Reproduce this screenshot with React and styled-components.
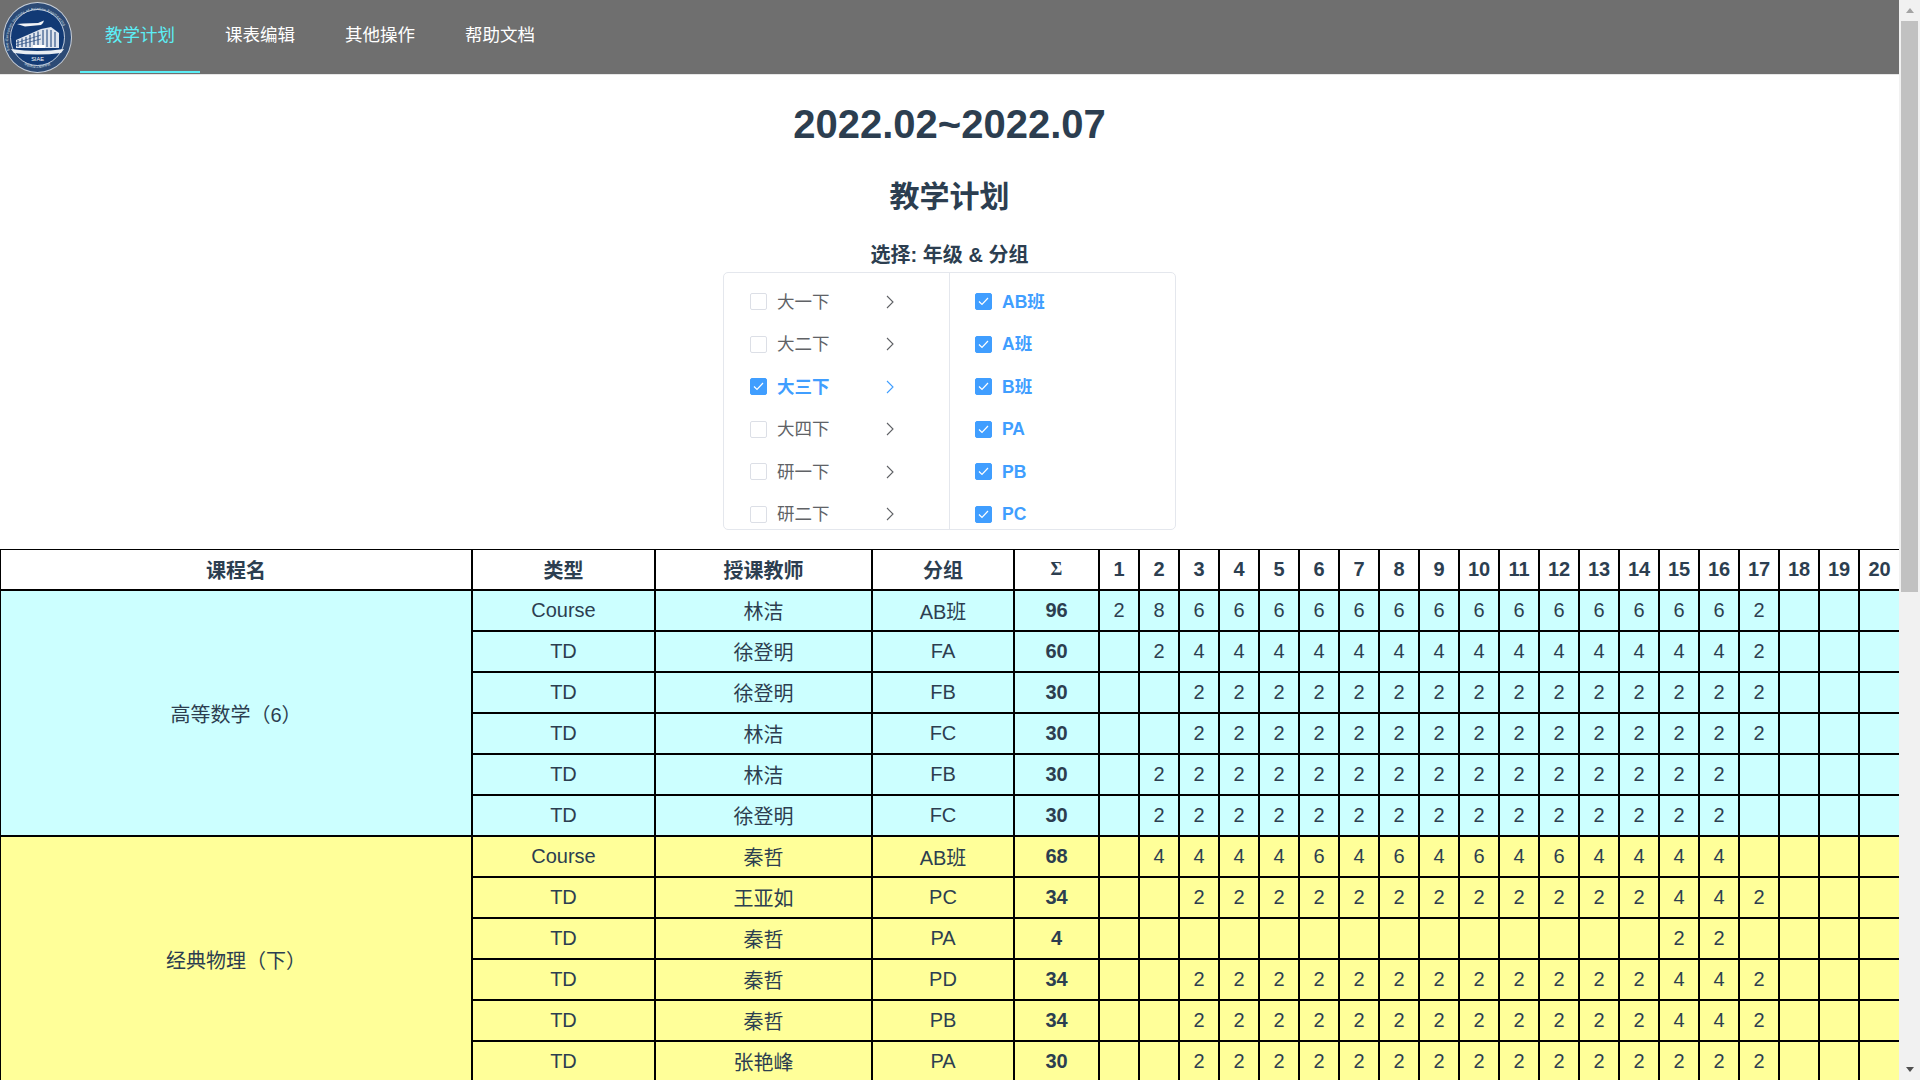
import styled, { createGlobalStyle } from "styled-components";

const GlobalStyle = createGlobalStyle`
  html, body { margin: 0; padding: 0; background: #fff; }
  body {
    font-family: "Liberation Sans", "Noto Sans CJK SC", sans-serif;
    color: #2c3e50;
  }
`;

const terms = ["大一下", "大二下", "大三下", "大四下", "研一下", "研二下"];
const groups = ["AB班", "A班", "B班", "PA", "PB", "PC"];
const navItems = ["教学计划", "课表编辑", "其他操作", "帮助文档"];

const blocks = [
  {
    name: "高等数学（6）",
    tone: "#ccffff",
    rows: [
      ["Course", "林洁", "AB班", 96, [2, 8, 6, 6, 6, 6, 6, 6, 6, 6, 6, 6, 6, 6, 6, 6, 2]],
      ["TD", "徐登明", "FA", 60, ["", 2, 4, 4, 4, 4, 4, 4, 4, 4, 4, 4, 4, 4, 4, 4, 2]],
      ["TD", "徐登明", "FB", 30, ["", "", 2, 2, 2, 2, 2, 2, 2, 2, 2, 2, 2, 2, 2, 2, 2]],
      ["TD", "林洁", "FC", 30, ["", "", 2, 2, 2, 2, 2, 2, 2, 2, 2, 2, 2, 2, 2, 2, 2]],
      ["TD", "林洁", "FB", 30, ["", 2, 2, 2, 2, 2, 2, 2, 2, 2, 2, 2, 2, 2, 2, 2]],
      ["TD", "徐登明", "FC", 30, ["", 2, 2, 2, 2, 2, 2, 2, 2, 2, 2, 2, 2, 2, 2, 2]],
    ],
  },
  {
    name: "经典物理（下）",
    tone: "#ffff99",
    rows: [
      ["Course", "秦哲", "AB班", 68, ["", 4, 4, 4, 4, 6, 4, 6, 4, 6, 4, 6, 4, 4, 4, 4]],
      ["TD", "王亚如", "PC", 34, ["", "", 2, 2, 2, 2, 2, 2, 2, 2, 2, 2, 2, 2, 4, 4, 2]],
      ["TD", "秦哲", "PA", 4, ["", "", "", "", "", "", "", "", "", "", "", "", "", "", 2, 2]],
      ["TD", "秦哲", "PD", 34, ["", "", 2, 2, 2, 2, 2, 2, 2, 2, 2, 2, 2, 2, 4, 4, 2]],
      ["TD", "秦哲", "PB", 34, ["", "", 2, 2, 2, 2, 2, 2, 2, 2, 2, 2, 2, 2, 4, 4, 2]],
      ["TD", "张艳峰", "PA", 30, ["", "", 2, 2, 2, 2, 2, 2, 2, 2, 2, 2, 2, 2, 2, 2, 2]],
    ],
  },
];

const weeks = Array.from({ length: 20 }, (_, i) => i + 1);

const Page = styled.div`
  width: 1899px;
  padding-bottom: 40px;
`;

const ScrollRail = styled.div`
  position: fixed;
  top: 0;
  right: 0;
  width: 21px;
  height: 100vh;
  background: #f1f1f1;
  display: flex;
  flex-direction: column;
`;

const ScrollButton = styled.div`
  height: 21px;
  flex: none;
  display: flex;
  align-items: center;
  justify-content: center;
  &::before {
    content: "";
    border-left: 4.5px solid transparent;
    border-right: 4.5px solid transparent;
    ${(p) => (p.$down ? "border-top: 5px solid #505050;" : "border-bottom: 5px solid #a3a3a3;")}
  }
`;

const ScrollThumb = styled.div`
  height: 571px;
  margin: 0 2px;
  background: #c1c1c1;
`;

const ScrollGap = styled.div`
  flex: 1;
`;

const Nav = styled.nav`
  display: flex;
  align-items: flex-start;
  height: 74px;
  background: #6f6f6f;
  border-bottom: 1px solid #e6e6e6;
`;

const LogoBox = styled.div`
  width: 80px;
  padding: 2px 0 0 3px;
  box-sizing: border-box;
`;

const NavItem = styled.div`
  width: 120px;
  height: 73px;
  box-sizing: border-box;
  display: flex;
  align-items: center;
  justify-content: center;
  padding-bottom: 4px;
  font-size: 17.5px;
  color: ${(p) => (p.$active ? "#5ceef6" : "#fff")};
  border-bottom: 2px solid ${(p) => (p.$active ? "#5ceef6" : "transparent")};
`;

const Title = styled.h1`
  margin: 26px 0 0;
  font-size: 40px;
  line-height: 46px;
  text-align: center;
`;

const SubTitle = styled.h2`
  margin: 28px 0 0;
  font-size: 30px;
  line-height: 44px;
  text-align: center;
`;

const Label = styled.h3`
  margin: 21px 0 0;
  font-size: 20px;
  line-height: 30px;
  text-align: center;
`;

const Panel = styled.div`
  display: flex;
  width: 453px;
  height: 258px;
  box-sizing: border-box;
  margin: 2px auto 19px;
  border: 1px solid #e4e7ed;
  border-radius: 5px;
  overflow: hidden;
`;

const Menu = styled.ul`
  list-style: none;
  margin: 0;
  padding: 7.5px 0 0;
  width: ${(p) => (p.$first ? "225px" : "226px")};
  flex: none;
  box-sizing: border-box;
  height: 256px;
  overflow: hidden;
  & + & {
    border-left: 1px solid #e4e7ed;
  }
`;

const MenuRow = styled.li`
  display: flex;
  align-items: center;
  height: 42.5px;
  padding-left: ${(p) => (p.$inset ? "25px" : "26px")};
  font-size: 17.5px;
  font-weight: ${(p) => (p.$on ? 700 : 400)};
  color: ${(p) => (p.$on ? "#409eff" : "#606266")};
`;

const Check = styled.span`
  width: 17px;
  height: 17px;
  box-sizing: border-box;
  flex: none;
  margin-right: 10px;
  border-radius: 2px;
  border: 1px solid ${(p) => (p.$on ? "#409eff" : "#dcdfe6")};
  background: ${(p) => (p.$on ? "#409eff" : "#fff")};
  display: flex;
  align-items: center;
  justify-content: center;
`;

const RowText = styled.span`
  width: 109px;
  line-height: 20px;
`;

const Grid = styled.table`
  width: 1899px;
  table-layout: fixed;
  border-collapse: separate;
  border-spacing: 0;
  border-top: 1px solid #000;
  border-left: 1px solid #000;
  font-size: 20px;
  text-align: center;
`;

const Th = styled.th`
  height: 41px;
  padding: 0;
  box-sizing: border-box;
  font-size: ${(p) => (p.$sigma ? "18px" : "20px")};
  font-family: ${(p) => (p.$sigma ? '"Liberation Serif", serif' : "inherit")};
  border-right: 2px solid #000;
  border-bottom: 2px solid #000;
  &:last-child {
    border-right-width: 1px;
  }
`;

const Td = styled.td`
  height: 41px;
  padding: 0;
  box-sizing: border-box;
  background: ${(p) => p.$tone};
  font-weight: ${(p) => (p.$bold ? 700 : 400)};
  border-right: 2px solid #000;
  border-bottom: 2px solid #000;
  &:last-child {
    border-right-width: 1px;
  }
`;

const Tick = () => (
  <svg width="11" height="9" viewBox="0 0 11 9" fill="none" stroke="#fff" strokeWidth="1.2">
    <path d="M1 4.5 L4 7.5 L10 1" />
  </svg>
);

const Chevron = ({ color }) => (
  <svg width="8" height="14" viewBox="0 0 8 14" fill="none" stroke={color} strokeWidth="1.1">
    <path d="M1 1 L7 7 L1 13" />
  </svg>
);

const Logo = () => (
  <svg width="69" height="71" viewBox="0 0 69 71" style={{ display: "block" }}>
    <defs>
      <path id="ringTop" d="M8 52 A29.5 30.5 0 1 1 61 52" />
      <path id="ringBottom" d="M9 52 A31 32 0 0 0 60 52" />
    </defs>
    <ellipse cx="34.5" cy="35.5" rx="34.5" ry="35.5" fill="#c9d1dc" />
    <ellipse cx="34.5" cy="35.5" rx="33.5" ry="34.5" fill="#2c4a75" />
    <ellipse cx="34.5" cy="35.5" rx="27" ry="28" fill="#123a75" stroke="#e8edf3" strokeWidth="0.8" />
    <text fontSize="3.7" fill="#dfe5ee" fontFamily="Liberation Sans" letterSpacing="0.25">
      <textPath href="#ringTop" startOffset="3%">Sino-European Institute of Aviation Engineering</textPath>
    </text>
    <text fontSize="3" fill="#dfe5ee" fontFamily="Noto Sans CJK SC">
      <textPath href="#ringBottom" startOffset="27%">中欧航空工程师学院</textPath>
    </text>
    <path d="M14 22 L20 21.5 L35 21 L41 18.5 L40 21 L38 23 L22 24.5 Z" fill="#f2f4f7" />
    <path d="M13 46 L13 38 L38 27 L48 25 L56 31 L56 46 Z" fill="#dfe5ee" />
    <path d="M15 45V38 M19 45V36.5 M23 45V35 M27 45V33 M31 45V31 M35 45V29.5 M40 45V28 M44 45V27.5 M48 45V28 M52 45V30" stroke="#123a75" strokeWidth="1" />
    <path d="M13 41 L38 33 M13 43.5 L38 37" stroke="#123a75" strokeWidth="0.6" />
    <path d="M30 43H42V46H30Z" fill="#fff" />
    <path d="M8 47 Q34.5 51 61 47 L58 51 Q34.5 54 11 51 Z" fill="#e8edf3" />
    <text x="34.5" y="58.5" textAnchor="middle" fontSize="5.6" fill="#fff" fontFamily="Liberation Sans">SIAE</text>
  </svg>
);

const colWidths = [472, 183, 217, 142, 85, ...weeks.map(() => 40)];

export default function App() {
  return (
    <Page>
      <GlobalStyle />
      <Nav>
        <LogoBox>
          <Logo />
        </LogoBox>
        {navItems.map((item, i) => (
          <NavItem key={item} $active={i === 0}>
            {item}
          </NavItem>
        ))}
      </Nav>
      <Title>2022.02~2022.07</Title>
      <SubTitle>教学计划</SubTitle>
      <Label>选择: 年级 &amp; 分组</Label>
      <Panel>
        <Menu $first>
          {terms.map((term, i) => (
            <MenuRow key={term} $on={i === 2}>
              <Check $on={i === 2}>{i === 2 && <Tick />}</Check>
              <RowText>{term}</RowText>
              <Chevron color={i === 2 ? "#409eff" : "#606266"} />
            </MenuRow>
          ))}
        </Menu>
        <Menu>
          {groups.map((group) => (
            <MenuRow key={group} $on $inset>
              <Check $on>
                <Tick />
              </Check>
              <RowText>{group}</RowText>
            </MenuRow>
          ))}
        </Menu>
      </Panel>
      <Grid>
        <colgroup>
          {colWidths.map((w, i) => (
            <col key={i} style={{ width: w }} />
          ))}
        </colgroup>
        <thead>
          <tr>
            <Th>课程名</Th>
            <Th>类型</Th>
            <Th>授课教师</Th>
            <Th>分组</Th>
            <Th $sigma>Σ</Th>
            {weeks.map((w) => (
              <Th key={w}>{w}</Th>
            ))}
          </tr>
        </thead>
        <tbody>
          {blocks.map((block) =>
            block.rows.map(([type, teacher, group, total, hours], r) => (
              <tr key={r}>
                {r === 0 && (
                  <Td $tone={block.tone} rowSpan={block.rows.length}>
                    {block.name}
                  </Td>
                )}
                <Td $tone={block.tone}>{type}</Td>
                <Td $tone={block.tone}>{teacher}</Td>
                <Td $tone={block.tone}>{group}</Td>
                <Td $tone={block.tone} $bold>
                  {total}
                </Td>
                {weeks.map((w) => (
                  <Td key={w} $tone={block.tone}>
                    {hours[w - 1]}
                  </Td>
                ))}
              </tr>
            ))
          )}
        </tbody>
      </Grid>
      <ScrollRail>
        <ScrollButton />
        <ScrollThumb />
        <ScrollGap />
        <ScrollButton $down />
      </ScrollRail>
    </Page>
  );
}
